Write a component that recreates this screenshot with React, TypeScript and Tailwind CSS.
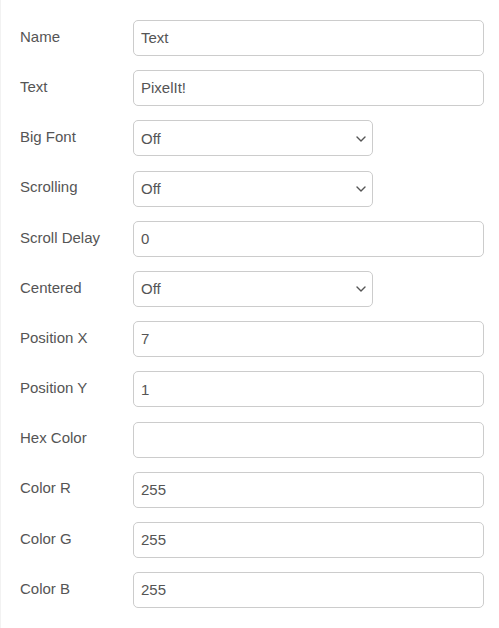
import React from "react";

type Field = { label: string; value: string; kind: "input" | "select" };

const fields: Field[] = [
  { label: "Name", value: "Text", kind: "input" },
  { label: "Text", value: "PixelIt!", kind: "input" },
  { label: "Big Font", value: "Off", kind: "select" },
  { label: "Scrolling", value: "Off", kind: "select" },
  { label: "Scroll Delay", value: "0", kind: "input" },
  { label: "Centered", value: "Off", kind: "select" },
  { label: "Position X", value: "7", kind: "input" },
  { label: "Position Y", value: "1", kind: "input" },
  { label: "Hex Color", value: "", kind: "input" },
  { label: "Color R", value: "255", kind: "input" },
  { label: "Color G", value: "255", kind: "input" },
  { label: "Color B", value: "255", kind: "input" },
];

function Chevron() {
  return (
    <svg width="10" height="6" viewBox="0 0 10 6" fill="none" className="shrink-0">
      <path d="M1 1l4 4 4-4" stroke="#555" strokeWidth="1.4" strokeLinecap="round" strokeLinejoin="round" />
    </svg>
  );
}

export default function App() {
  return (
    <div
      className="w-[499px] h-[628px] bg-white border-l border-[#f2f2f2] overflow-hidden"
      style={{ fontFamily: '"Liberation Sans", Arial, sans-serif' }}
    >
      <div className="flex flex-col gap-[14.2px] pt-[20px] pl-[19px]">
        {fields.map((f) => (
          <div key={f.label} className="flex items-center h-[36px]">
            <div className="w-[113px] text-[15px] text-[#555] mb-[2px]">{f.label}</div>
            {f.kind === "input" ? (
              <div className="w-[351px] h-[36px] border border-[#cccccc] rounded-[5px] flex items-center px-[7px] pt-[1px] text-[15px] text-[#555]">
                {f.value}
              </div>
            ) : (
              <div className="w-[240px] h-[36px] border border-[#cccccc] rounded-[5px] flex items-center justify-between pl-[7px] pr-[6px] pt-[1px] text-[15px] text-[#555]">
                <span>{f.value}</span>
                <Chevron />
              </div>
            )}
          </div>
        ))}
      </div>
    </div>
  );
}
